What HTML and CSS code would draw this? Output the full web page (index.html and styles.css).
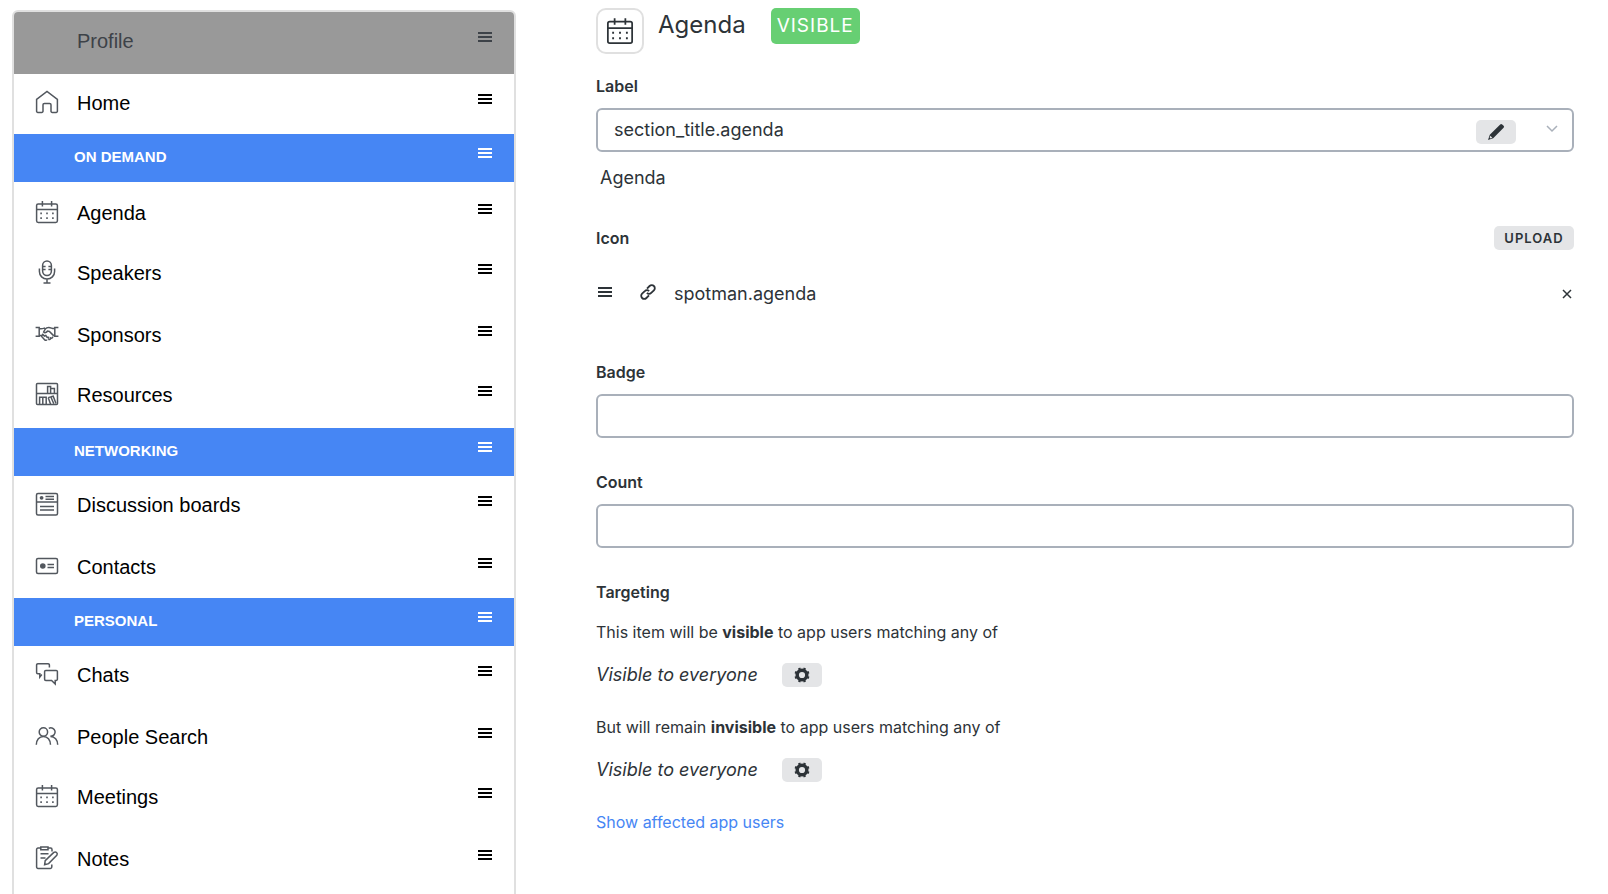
FILE: index.html
```html
<!DOCTYPE html>
<html lang="en">
<head>
  <meta charset="UTF-8">
  <title>Agenda</title>
  <link rel="stylesheet" href="styles.css">
</head>
<body>
  <!-- shared icons -->
  <svg class="sprite" aria-hidden="true">
    <symbol id="bars" viewBox="0 0 14 10">
      <path d="M0 1h14M0 5h14M0 9h14" fill="none" stroke="currentColor" stroke-width="2"/>
    </symbol>
    <symbol id="calendar" viewBox="0 0 24 24">
      <rect x="1.6" y="4" width="20.8" height="18.4" rx="1.6"/>
      <path d="M1.6 9.5h20.8M7.4 1v5.6M16.6 1v5.6"/>
      <path d="M5.3 13.4h1.6M11.200 13.4h1.6M17.1 13.4h1.6M5.3 18.2h1.6M11.200 18.2h1.6M17.1 18.2h1.6" stroke-width="1.7"/>
    </symbol>
    <symbol id="gear" viewBox="0 0 16 16">
      <circle cx="8" cy="8" r="4.8" fill="none" stroke="currentColor" stroke-width="3.4"/>
      <g stroke="currentColor" stroke-width="2.4">
        <path d="M5.100 1 10.900 15M10.900 1 5.100 15M1 5.100 15 10.900M1 10.900 15 5.100" stroke-dasharray="2.600 9.950"/>
      </g>
    </symbol>
  </svg>

  <div class="page">
    <nav class="menu">
      <ul>
        <li class="item tall profile"><a href="#"><span class="icon"></span>Profile</a><svg class="bars"><use href="#bars"/></svg></li>
        <li class="item"><a href="#">
          <svg class="icon" viewBox="0 0 24 24"><path d="M1.6 9.4 12 1.4l10.4 8v11.8a1.2 1.2 0 0 1-1.2 1.2h-4a1.2 1.2 0 0 1-1.2-1.2v-6.4a1.4 1.4 0 0 0-1.4-1.4H9.400a1.4 1.4 0 0 0-1.4 1.4v6.4a1.2 1.2 0 0 1-1.2 1.2h-4a1.2 1.2 0 0 1-1.2-1.2z"/></svg>Home</a><svg class="bars"><use href="#bars"/></svg></li>
      </ul>

      <h2 class="heading">ON DEMAND<svg class="bars"><use href="#bars"/></svg></h2>
      <ul class="spaced">
        <li class="item"><a href="#"><svg class="icon"><use href="#calendar"/></svg>Agenda</a><svg class="bars"><use href="#bars"/></svg></li>
        <li class="item tall"><a href="#">
          <svg class="icon" viewBox="0 0 24 24"><rect x="7.600" y="1" width="8.800" height="14.400" rx="4.400"/><path d="M4.400 8.500v3a7.600 7.600 0 0 0 15.200 0v-3M12 19v4M8.500 23h7M7.600 6.500h3M13.400 6.500h3M7.600 9.500h3M13.400 9.500h3"/></svg>Speakers</a><svg class="bars"><use href="#bars"/></svg></li>
        <li class="item"><a href="#">
          <svg class="icon" viewBox="0 0 24 24"><path d="M.6 5.500h3.600v8.800H.6M23.400 5.500h-3.600v8.800h3.600M4.200 6.500c2 .8 4 0 6-.6M19.800 6.500c-2.500.6-3.500-1-6-1-1.500 0-2.800.6-3.600 1.600L8.600 10c1.200 1.200 2.800.6 4-1l1.800.4 4.200 4.200M4.200 13.500h1.600l4 4.400c.8.8 2 .4 2-.4M6.400 14l1.400-1.600 1.600 1.600 1.400-.6 1 1.600 1.600.4v1.400M13.400 17.200c1 .8 2.400 0 2.200-1.200 1.200.6 2.400-.4 2-1.600M18.600 13.600h1.200"/></svg>Sponsors</a><svg class="bars"><use href="#bars"/></svg></li>
        <li class="item"><a href="#">
          <svg class="icon" viewBox="0 0 24 24"><rect x="1.500" y="1.500" width="21" height="21" rx="1"/><path d="M1.500 11.600h21M12.600 11.600V4.500h3v7.100M15.600 6.500h3.800v5.100M4.600 22v-6.800h3.200V22M7.800 15.200h3.400V22M13.200 15.600l2.400 6.600M13.200 15.600l2.600-.8 3 7M16.200 14.800l2-.6 2.800 7.400"/></svg>Resources</a><svg class="bars"><use href="#bars"/></svg></li>
      </ul>

      <h2 class="heading">NETWORKING<svg class="bars"><use href="#bars"/></svg></h2>
      <ul>
        <li class="item tall"><a href="#">
          <svg class="icon" viewBox="0 0 24 24"><rect x="1.500" y="1.500" width="21" height="21.400" rx="1.500"/><path d="M1.500 10h21M10.500 4.500h8.500M10.500 7.200h8.500M5 14.500h14M5 18h14"/><circle class="dot" cx="6.600" cy="5.800" r="1.900"/></svg>Discussion boards</a><svg class="bars"><use href="#bars"/></svg></li>
        <li class="item"><a href="#">
          <svg class="icon" viewBox="0 0 24 24"><rect x="1.500" y="4.500" width="21" height="15" rx="1.500"/><path d="M12.500 10.500H19M12.500 13.500H19"/><circle class="dot" cx="7.800" cy="12" r="2.800"/></svg>Contacts</a><svg class="bars"><use href="#bars"/></svg></li>
      </ul>

      <h2 class="heading">PERSONAL<svg class="bars"><use href="#bars"/></svg></h2>
      <ul>
        <li class="item tall"><a href="#">
          <svg class="icon" viewBox="0 0 24 24"><path d="M6.800 12.500 4.800 15v-3.200H2.800a1.200 1.200 0 0 1-1.200-1.200V3a1.200 1.200 0 0 1 1.200-1.200h10.400A1.200 1.200 0 0 1 14.400 3v2.400M10.800 8.400h10.400a1.200 1.200 0 0 1 1.200 1.200v7.600a1.200 1.200 0 0 1-1.200 1.200h-1V22l-3.600-3.600h-5.800a1.200 1.200 0 0 1-1.200-1.200V9.600a1.200 1.200 0 0 1 1.200-1.200z"/></svg>Chats</a><svg class="bars"><use href="#bars"/></svg></li>
        <li class="item"><a href="#">
          <svg class="icon" viewBox="0 0 24 24"><circle cx="8.400" cy="8" r="4.200"/><path d="M1.300 20.800c0-5 3-8.400 7.100-8.400s7.100 3.400 7.100 8.400M13.800 4.400a4.200 4.200 0 1 1 1.600 7.800M15.400 12.400c4.300 0 7.300 3.400 7.300 8.400"/></svg>People Search</a><svg class="bars"><use href="#bars"/></svg></li>
        <li class="item tall"><a href="#"><svg class="icon"><use href="#calendar"/></svg>Meetings</a><svg class="bars"><use href="#bars"/></svg></li>
        <li class="item"><a href="#">
          <svg class="icon" viewBox="0 0 24 24"><path d="M16.800 18.500V21a1.400 1.400 0 0 1-1.400 1.400H3A1.400 1.400 0 0 1 1.600 21V3.400A1.400 1.400 0 0 1 3 2h2.800M13 2h2.600A1.400 1.400 0 0 1 17 3.400v2.200M5.800 1h7.200v2.800H5.800zM5.500 7.800h8M5.500 12h5M9.600 18.800l.6-4.200 8.600-8.200c2-1.400 4.400.8 3 2.800l-8.200 8.400z"/></svg>Notes</a><svg class="bars"><use href="#bars"/></svg></li>
      </ul>
    </nav>

    <main class="editor">
      <header class="title">
        <span class="title-icon"><svg class="icon"><use href="#calendar"/></svg></span>
        <h1>Agenda</h1>
        <span class="status">VISIBLE</span>
      </header>

      <label class="label" for="label">Label</label>
      <div class="picker">
        <select id="label" class="control">
          <option>section_title.agenda</option>
        </select>
        <button type="button" class="btn" aria-label="Edit label">
          <svg width="18" height="18" viewBox="0 0 18 18"><path d="M13.200 1.400q1-1 2 0l1.400 1.400q1 1 0 2L6.200 15.200 1 17l1.800-5.200z" fill="currentColor"/><path d="M3.400 12.800l1.900 1.900-1.800.7-.8-.8z" fill="#e4e5e7"/></svg>
        </button>
        <svg class="chevron" viewBox="0 0 12 8"><path d="M1 1l5 5 5-5" fill="none" stroke="currentColor" stroke-width="1.500"/></svg>
      </div>
      <p class="preview">Agenda</p>

      <div class="icon-head">
        <h3 class="label">Icon</h3>
        <button type="button" class="btn upload">UPLOAD</button>
      </div>
      <div class="file">
        <svg class="bars"><use href="#bars"/></svg>
        <svg class="link-icon" viewBox="0 0 16 16"><path d="M7 4.600 9.600 2a3 3 0 0 1 4.300 0 3 3 0 0 1 0 4.300l-2.700 2.600a3 3 0 0 1-4.300 0M9 11.400 6.400 14a3 3 0 0 1-4.300 0 3 3 0 0 1 0-4.300l2.700-2.600a3 3 0 0 1 4.300 0"/></svg>
        <span class="file-name">spotman.agenda</span>
        <button type="button" class="remove" aria-label="Remove icon">
          <svg width="10" height="10" viewBox="0 0 10 10"><path d="M1 1l8 8M9 1L1 9" stroke="currentColor" stroke-width="1.500"/></svg>
        </button>
      </div>

      <div class="field">
        <label class="label" for="badge">Badge</label>
        <input class="control" type="text" id="badge">
      </div>
      <div class="field">
        <label class="label" for="count">Count</label>
        <input class="control" type="text" id="count">
      </div>

      <section class="targeting">
        <h3 class="label">Targeting</h3>
        <p>This item will be <b>visible</b> to app users matching any of</p>
        <div class="rule">
          <em>Visible to everyone</em>
          <button type="button" class="btn" aria-label="Edit visible rule"><svg width="16" height="16"><use href="#gear"/></svg></button>
        </div>
        <p>But will remain <b>invisible</b> to app users matching any of</p>
        <div class="rule">
          <em>Visible to everyone</em>
          <button type="button" class="btn" aria-label="Edit invisible rule"><svg width="16" height="16"><use href="#gear"/></svg></button>
        </div>
        <a class="affected" href="#">Show affected app users</a>
      </section>
    </main>
  </div>
</body>
</html>
```

FILE: styles.css
```css
* {
  box-sizing: border-box;
}
body {
  margin: 0;
  background: #fff;
  color: #2d3338;
  font-family: Inter, sans-serif;
  font-size: 16px;
  line-height: 20px;
}
h1, h2, h3, p, ul {
  margin: 0;
  padding: 0;
}
ul {
  list-style: none;
}
button {
  font-family: inherit;
  color: inherit;
  border: 0;
  padding: 0;
  cursor: pointer;
}
.sprite {
  display: none;
}
.page {
  display: flex;
  gap: 80px;
  height: 100vh;
  overflow: hidden;
  padding: 0 34px 0 12px;
}

/* left menu */
.menu {
  flex: 0 0 504px;
  align-self: flex-start;
  margin-top: 10px;
  min-height: 100vh;
  border: 2px solid #e0e0e0;
  border-radius: 6px 6px 0 0;
  overflow: hidden;
  color: #000;
  font-family: "Liberation Sans", Arial, sans-serif;
}
.spaced {
  padding: 2px 0;
}
.item, .heading {
  display: flex;
  justify-content: space-between;
  align-items: flex-start;
  padding-right: 22px;
}
.item {
  height: 60px;
  padding-top: 16px;
}
.item.tall {
  height: 62px;
}
.item a {
  display: flex;
  align-items: flex-start;
  gap: 18px;
  padding-left: 21px;
  color: inherit;
  font-size: 20px;
  line-height: 26px;
  text-decoration: none;
}
.item.profile {
  background: #999;
  color: #3d4248;
}
.icon {
  width: 24px;
  height: 24px;
  fill: none;
  stroke: #52575e;
  stroke-width: 1.5;
}
.dot {
  fill: #52575e;
  stroke: none;
}
.bars {
  width: 14px;
  height: 10px;
  flex: none;
}
.item .bars {
  margin-top: 4px;
}
.heading {
  height: 48px;
  padding-top: 14px;
  padding-left: 60px;
  background: #4686f4;
  color: #fff;
  font-size: 15px;
  line-height: 18px;
}

/* right side */
.editor {
  flex: 1;
  min-width: 0;
  padding-top: 8px;
}
.title {
  display: flex;
  align-items: flex-start;
  height: 68px;
}
.title-icon {
  display: flex;
  align-items: center;
  justify-content: center;
  width: 48px;
  height: 46px;
  border: 2px solid #e0e0e0;
  border-radius: 10px;
}
.title-icon .icon {
  width: 28px;
  height: 28px;
  stroke: #2d3338;
}
.title h1 {
  margin: 0 25px 0 14px;
  font-size: 24px;
  font-weight: 400;
  line-height: 34px;
}
.status {
  padding: 0 6px;
  border-radius: 5px;
  background: #67cf73;
  color: #fff;
  font-size: 19px;
  line-height: 36px;
  letter-spacing: 1px;
}
.label {
  display: block;
  margin-bottom: 12px;
  font-size: 16px;
  font-weight: 600;
  line-height: 20px;
}
.control {
  display: block;
  width: 100%;
  height: 44px;
  padding: 0 16px;
  border: 2px solid #a9b0ba;
  border-radius: 6px;
  background: #fff;
  color: inherit;
  font-family: inherit;
  font-size: 18px;
  appearance: none;
}
.picker {
  display: grid;
  grid-template-columns: 1fr 40px 58px;
  align-items: center;
}
.picker .control {
  grid-area: 1 / 1 / 2 / -1;
  padding-bottom: 2px;
}
.picker .btn {
  grid-area: 1 / 2;
  margin-top: 4px;
}
.chevron {
  grid-area: 1 / 3;
  justify-self: end;
  width: 12px;
  height: 8px;
  margin: 0 16px 2px 0;
  color: #a9b0ba;
  pointer-events: none;
}
.btn {
  display: flex;
  align-items: center;
  justify-content: center;
  width: 40px;
  height: 24px;
  border-radius: 5px;
  background: #e4e5e7;
}
.preview {
  padding: 14px 4px;
  font-size: 18px;
  line-height: 24px;
}
.icon-head {
  display: flex;
  justify-content: space-between;
  padding-top: 22px;
}
.icon-head .label {
  margin: 2px 0;
}
.upload {
  width: 80px;
  font-size: 13px;
  font-weight: 600;
  letter-spacing: 1px;
}
.file {
  display: flex;
  align-items: center;
  height: 48px;
  margin: 20px 0 44px;
  padding-left: 2px;
}
.file .bars, .link-icon {
  margin-bottom: 4px;
}
.link-icon {
  width: 16px;
  height: 16px;
  margin-left: 28px;
  margin-right: 18px;
  fill: none;
  stroke: currentColor;
  stroke-width: 1.8;
}
.file-name {
  flex: 1;
  font-size: 18px;
  line-height: 24px;
}
.remove {
  display: flex;
  padding: 2px;
  background: none;
}
.field {
  margin-bottom: 34px;
}
.targeting .label {
  margin-bottom: 20px;
}
.rule {
  display: flex;
  align-items: center;
  gap: 24px;
  margin: 21px 0 30px;
  font-size: 18px;
  line-height: 24px;
}
.affected {
  color: #4686f4;
  text-decoration: none;
}
```
